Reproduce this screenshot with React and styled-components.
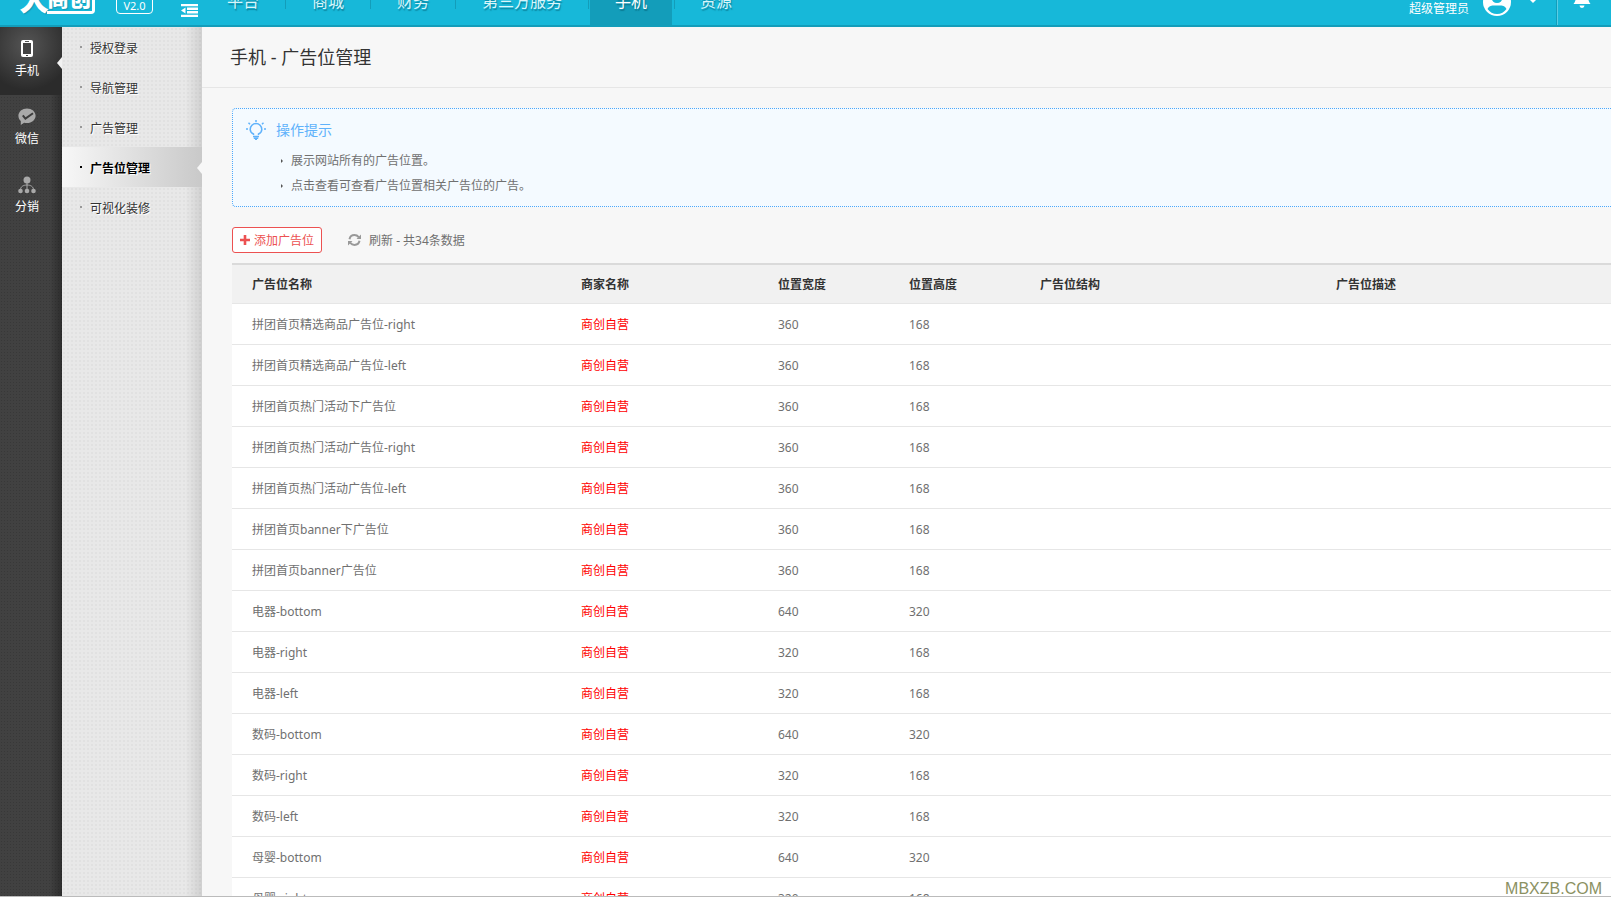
import React from 'react'
import styled, { createGlobalStyle } from 'styled-components'

const NAV = ['平台', '商城', '财务', '第三方服务', '手机', '资源']

const MENU = ['授权登录', '导航管理', '广告管理', '广告位管理', '可视化装修']

const COLUMNS = ['广告位名称', '商家名称', '位置宽度', '位置高度', '广告位结构', '广告位描述']

const ROWS = [
  ['拼团首页精选商品广告位-right', 360, 168],
  ['拼团首页精选商品广告位-left', 360, 168],
  ['拼团首页热门活动下广告位', 360, 168],
  ['拼团首页热门活动广告位-right', 360, 168],
  ['拼团首页热门活动广告位-left', 360, 168],
  ['拼团首页banner下广告位', 360, 168],
  ['拼团首页banner广告位', 360, 168],
  ['电器-bottom', 640, 320],
  ['电器-right', 320, 168],
  ['电器-left', 320, 168],
  ['数码-bottom', 640, 320],
  ['数码-right', 320, 168],
  ['数码-left', 320, 168],
  ['母婴-bottom', 640, 320],
  ['母婴-right', 320, 168],
]

const PhoneIcon = () =>
  <svg width="14" height="18" viewBox="0 0 14 18">
    <rect x="1" y="0" width="12" height="17" rx="2" fill="#fff" />
    <rect x="3" y="3" width="8" height="11" fill="#444" />
    <rect x="5" y="1" width="4" height="1" fill="#555" />
    <rect x="6" y="15" width="2" height="1" fill="#444" />
  </svg>

const WechatIcon = () =>
  <svg width="18" height="18" viewBox="0 0 18 18">
    <path d="M9 0.5c4.8 0 8.6 3.200 8.600 7.300s-3.800 7.300-8.600 7.300c-1 0-2-.1-2.900-.4L2.800 17v-4C1.300 11.700.4 9.900.4 7.800.4 3.700 4.200.5 9 .5z" fill="#a9a9a9" />
    <path d="M4.800 7.300l2.600 3.300 7.600-5.400" fill="none" stroke="#3d3d3d" strokeWidth="2" />
  </svg>

const ShareIcon = () =>
  <svg width="18" height="18" viewBox="0 0 18 18">
    <path d="M9 4v10M2.500 14c0-3.500 3-5 6.500-5s6.500 1.500 6.500 5" fill="none" stroke="#a9a9a9" strokeWidth="1" />
    <circle cx="9" cy="4" r="3.500" fill="#a9a9a9" />
    <circle cx="2.500" cy="15" r="2.300" fill="#a9a9a9" />
    <circle cx="9" cy="15" r="2.300" fill="#a9a9a9" />
    <circle cx="15.500" cy="15" r="2.300" fill="#a9a9a9" />
  </svg>

const FoldIcon = () =>
  <svg width="17" height="13" viewBox="0 0 17 13" fill="#fff">
    <path d="M0 0h17v2.300H0zM6 3.600h11v2.300H6zM6 7.100h11v2.300H6zM0 10.700h17V13H0zM0 6.500l4.500-3v6z" />
  </svg>

const AvatarIcon = () =>
  <svg width="28" height="28" viewBox="0 0 28 28">
    <circle cx="14" cy="14" r="14" fill="#fff" />
    <circle cx="14" cy="9.500" r="5.500" fill="#17b8d9" />
    <path d="M4.500 21c2-4 5.500-3.500 9.500-3.500s7.500-.5 9.500 3.500c-2.200 3-5.500 5-9.500 5s-7.300-2-9.500-5z" fill="#17b8d9" />
  </svg>

const BellIcon = () =>
  <svg width="18" height="20" viewBox="0 0 18 20" fill="#fff">
    <path d="M9 0c4 0 6 3 6 7 0 4 1 6 2.500 8H.5C2 13 3 11 3 7c0-4 2-7 6-7zM6.500 16.500h5a2.500 2.500 0 0 1-5 0z" />
  </svg>

const BulbIcon = () =>
  <svg width="20" height="20" viewBox="0 0 20 20" fill="none" stroke="#5fb2fb" strokeWidth="1.500">
    <path d="M7.500 15v-1C5.500 13 4.200 11.500 4.200 9.400a5.800 5.800 0 0 1 11.600 0c0 2.100-1.300 3.600-3.300 4.600v1" />
    <path d="M7 16.500h6M7.800 18.200h4.400M9 19.400h2M10 0v2M0 9h2M18 9h2M2.500 2.800l1.500 1.400M17.500 2.800L16 4.200" />
  </svg>

const PlusIcon = () =>
  <svg width="10" height="10" viewBox="0 0 10 10">
    <path d="M5 0v10M0 5h10" stroke="#ec5151" strokeWidth="2.600" />
  </svg>

const RefreshIcon = () =>
  <svg width="13" height="12" viewBox="0 0 13 12">
    <path d="M1.500 5.200C2 2.700 4 1.100 6.500 1.100c1.700 0 3.200.8 4.200 2M11.500 6.800c-.5 2.500-2.500 4.100-5 4.100-1.700 0-3.200-.8-4.200-2" fill="none" stroke="#999" strokeWidth="2" />
    <path d="M13 .5V5H8.500zM0 11.500V7h4.500z" fill="#999" />
  </svg>

const RAIL = [
  ['手机', PhoneIcon],
  ['微信', WechatIcon],
  ['分销', ShareIcon],
]

const App = () =>
  <Page>
    <GlobalStyle />
    <Header>
      <Brand>
        <Logo><LogoBig>大</LogoBig><LogoSmall>商创</LogoSmall></Logo>
        <Version>V2.0</Version>
        <FoldButton aria-label="收起菜单"><FoldIcon /></FoldButton>
      </Brand>
      <Nav>
        {NAV.map(name =>
          <NavLink key={name} href="#" $active={name === '手机'}>{name}</NavLink>
        )}
      </Nav>
      <Account>
        <AdminName>超级管理员</AdminName>
        <AvatarIcon />
        <Caret />
      </Account>
      <BellButton aria-label="消息"><BellIcon /></BellButton>
    </Header>
    <Body>
      <Rail>
        {RAIL.map(([name, Icon], i) =>
          <RailLink key={name} href="#" $active={i === 0}>
            <RailIcon><Icon /></RailIcon>
            {name}
          </RailLink>
        )}
      </Rail>
      <Menu>
        {MENU.map(name =>
          <MenuLink key={name} href="#" $active={name === '广告位管理'}>{name}</MenuLink>
        )}
      </Menu>
      <Main>
        <Title>手机 - 广告位管理</Title>
        <Content>
          <Tips>
            <TipsTitle><BulbIcon />操作提示</TipsTitle>
            <TipsList>
              <Tip>展示网站所有的广告位置。</Tip>
              <Tip>点击查看可查看广告位置相关广告位的广告。</Tip>
            </TipsList>
          </Tips>
          <Toolbar>
            <AddButton><PlusIcon />添加广告位</AddButton>
            <RefreshButton><RefreshIcon />刷新 - 共34条数据</RefreshButton>
          </Toolbar>
          <Table>
            <thead>
              <tr>
                {COLUMNS.map(name => <Th key={name}>{name}</Th>)}
              </tr>
            </thead>
            <tbody>
              {ROWS.map(([name, width, height]) =>
                <tr key={name}>
                  <Td>{name}</Td>
                  <Td $shop>商创自营</Td>
                  <Td>{width}</Td>
                  <Td>{height}</Td>
                  <Td />
                  <Td />
                </tr>
              )}
            </tbody>
          </Table>
        </Content>
      </Main>
    </Body>
    <Footer />
    <Watermark>MBXZB.COM</Watermark>
  </Page>

export default App

const GlobalStyle = createGlobalStyle`
  * {
    box-sizing: border-box;
  }
  body {
    margin: 0;
    overflow: hidden;
    font-family: 'Noto Sans', 'Noto Sans CJK SC', sans-serif;
    font-size: 12px;
    color: #707070;
  }
  button {
    margin: 0;
    padding: 0;
    border: 0;
    background: none;
    font: inherit;
    color: inherit;
    cursor: pointer;
  }
  a {
    color: inherit;
    text-decoration: none;
  }
  svg {
    display: block;
    flex: none;
  }
`

const Page = styled.div`
  position: relative;
  display: flex;
  flex-direction: column;
  height: 100vh;
  background: #fff;
`

/* the bar is scrolled half out of view, its items hang from the bottom edge */
const Header = styled.header`
  display: flex;
  flex: none;
  align-items: flex-end;
  height: 27px;
  overflow: hidden;
  background: #17b8d9;
  border-bottom: 2px solid #139dba;
  color: #fff;
`

const Brand = styled.div`
  display: flex;
  align-items: flex-end;
  width: 201px;
  padding: 0 3px 8px 19px;
`

const Logo = styled.div`
  display: flex;
  align-items: flex-end;
  width: 76px;
  height: 34px;
  margin-bottom: 3px;
  font-weight: 900;
  text-shadow: 1px 1px 1px #1397b3;
`

const LogoBig = styled.span`
  width: 28px;
  font-size: 30px;
  line-height: 30px;
`

const LogoSmall = styled.span`
  flex: 1;
  border: solid #fff;
  border-width: 0 3px 3px 0;
  border-radius: 0 0 4px 0;
  font-size: 22px;
  line-height: 28px;
`

const Version = styled.span`
  width: 37px;
  height: 20px;
  margin: 0 28px 3px 21px;
  border: 1px solid #fff;
  border-radius: 4px;
  line-height: 22px;
  text-align: center;
  font-size: 11px;
`

const FoldButton = styled.button`
  flex: none;
`

const Nav = styled.nav`
  display: flex;
  flex: 1;
`

const NavLink = styled.a`
  height: 50px;
  padding: 0 27px 0 26px;
  line-height: 52px;
  font-size: 16px;
  color: ${props => props.$active ? '#fff' : '#d9f5fa'};
  background: ${props => props.$active
    ? 'linear-gradient(#139dba, #139dba) 1px 0 / calc(100% - 3px) 100% no-repeat'
    : 'linear-gradient(#139dba, #139dba) right top / 1px 34px no-repeat'};
  text-shadow: 1px 2px 1px rgba(0, 90, 110, .5);

  &:last-child {
    background: linear-gradient(#139dba, #139dba) left top / 1px 34px no-repeat;
  }
`

const Account = styled.div`
  display: flex;
  align-items: flex-end;
  height: 50px;
  padding: 0 18px 9px 0;
`

const AdminName = styled.span`
  margin-right: 14px;
  line-height: 14px;
`

const Caret = styled.i`
  margin: 0 0 13px 17px;
  border: 5px solid transparent;
  border-top-color: #fff;
  border-bottom: 0;
`

const BellButton = styled.button`
  display: flex;
  justify-content: center;
  align-items: flex-end;
  width: 55px;
  height: 50px;
  padding: 0 5px 16px 0;
  border-left: 1px solid #139dba;
  box-shadow: inset 1px 0 #5ccde4;
`

const Body = styled.div`
  display: flex;
  flex: 1;
  min-height: 0;
`

const Rail = styled.nav`
  flex: none;
  width: 62px;
  background:
    linear-gradient(to right, transparent 80%, rgba(0, 0, 0, .3)),
    radial-gradient(#383838 1px, transparent 1px) 0 0 / 3px 3px,
    #414141;
`

const RailLink = styled.a`
  position: relative;
  display: flex;
  flex-direction: column;
  align-items: center;
  height: 68px;
  padding: 13px 8px 0 0;
  line-height: 24px;
  color: #fff;
  background: ${props => props.$active
    ? 'radial-gradient(circle at 27px 18px, #555, #2b2b2b 45px)'
    : 'none'};

  &::after {
    content: '';
    display: ${props => props.$active ? 'block' : 'none'};
    position: absolute;
    right: 0;
    top: 30px;
    border: 6px solid transparent;
    border-right: 5px solid #f2f2f2;
    border-left: 0;
  }
`

const RailIcon = styled.span`
  height: 19px;
`

const Menu = styled.nav`
  flex: none;
  width: 140px;
  background:
    linear-gradient(to right, transparent 88%, rgba(0, 0, 0, .1)),
    radial-gradient(#e1e1e1 1px, transparent 1px) 0 0 / 4px 4px,
    #e8e8e8;
`

const MenuLink = styled.a`
  position: relative;
  display: flex;
  align-items: center;
  height: 40px;
  padding-top: 2px;
  color: ${props => props.$active ? '#000' : '#333'};
  font-weight: ${props => props.$active ? 700 : 400};
  background: ${props => props.$active ? 'linear-gradient(to right, #f7f7f7, #c9c9c9)' : 'none'};
  text-shadow: 1px 1px #fff;

  &::before {
    content: '';
    width: 2px;
    height: 2px;
    margin: 0 8px 2px 18px;
    background: ${props => props.$active ? '#000' : '#999'};
  }

  &::after {
    content: '';
    display: ${props => props.$active ? 'block' : 'none'};
    position: absolute;
    right: 0;
    top: 15px;
    border: 6px solid transparent;
    border-right: 5px solid #f7f7f7;
    border-left: 0;
  }
`

const Main = styled.main`
  flex: 1;
  min-width: 0;
  overflow: hidden;
  background: #f7f7f7;
`

const Title = styled.h1`
  margin: 0;
  padding: 0 28px;
  height: 61px;
  border-bottom: 1px solid #e6e6e6;
  font-size: 18px;
  font-weight: 400;
  line-height: 60px;
  color: #333;
`

const Content = styled.div`
  padding: 20px 0 0 30px;
`

const Tips = styled.section`
  height: 99px;
  padding: 11px 12px;
  border: 1px dotted #4da8fa;
  border-right: 0;
  border-radius: 4px 0 0 4px;
  background: #f4faff;
`

const TipsTitle = styled.h2`
  display: flex;
  align-items: center;
  gap: 10px;
  margin: 0 0 8px;
  padding-left: 1px;
  font-size: 14px;
  font-weight: 400;
  line-height: 20px;
  color: #5fb2fb;
`

const TipsList = styled.ul`
  margin: 0;
  padding: 0 0 0 36px;
  list-style: none;
`

const Tip = styled.li`
  display: flex;
  align-items: center;
  line-height: 25px;

  &::before {
    content: '';
    margin-right: 8px;
    border: 2px solid transparent;
    border-left-color: #555;
    border-right: 0;
  }
`

const Toolbar = styled.div`
  display: flex;
  align-items: center;
  gap: 26px;
  padding: 20px 0 10px;
`

const AddButton = styled.button`
  display: flex;
  align-items: center;
  gap: 4px;
  height: 26px;
  padding: 0 7px;
  border: 1px solid #ec5151;
  border-radius: 3px;
  background: #fff;
  color: #ec5151;
`

const RefreshButton = styled.button`
  display: flex;
  align-items: center;
  gap: 8px;
`

const Table = styled.table`
  width: 100%;
  table-layout: fixed;
  border-spacing: 0;
  border-top: 2px solid #dadada;
  background: #fff;
`

const Th = styled.th`
  height: 39px;
  padding: 0 20px;
  border-bottom: 1px solid #e6e6e6;
  background: #f1f1f1;
  color: #333;
  text-align: left;
  font-weight: 700;

  &:nth-child(1) {
    width: 329px;
  }
  &:nth-child(2) {
    width: 197px;
  }
  &:nth-child(3),
  &:nth-child(4) {
    width: 131px;
  }
  &:nth-child(5) {
    width: 296px;
  }
`

const Td = styled.td`
  height: 41px;
  padding: 0 20px;
  border-bottom: 1px solid #e6e6e6;
  color: ${props => props.$shop ? '#f00' : '#707070'};
`

const Footer = styled.footer`
  flex: none;
  height: 4px;
  border-top: 1px solid #bbb;
  background: #fff;
`

const Watermark = styled.div`
  position: absolute;
  right: 9px;
  bottom: 2px;
  font-family: 'Liberation Sans', sans-serif;
  font-size: 16px;
  line-height: 18px;
  color: #8b9163;
`
